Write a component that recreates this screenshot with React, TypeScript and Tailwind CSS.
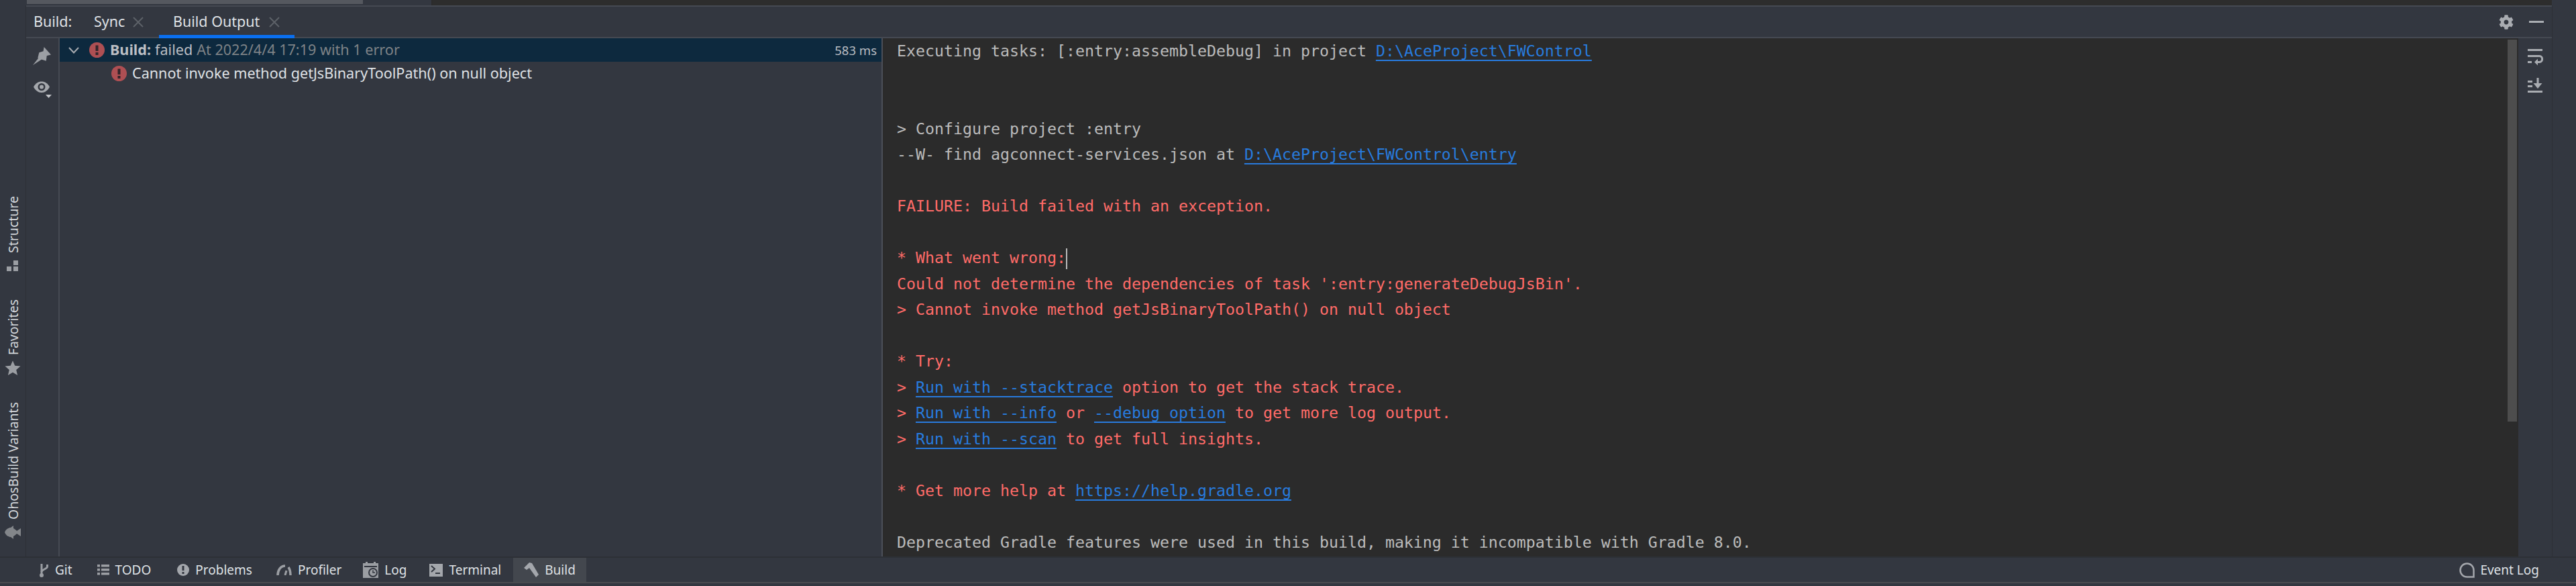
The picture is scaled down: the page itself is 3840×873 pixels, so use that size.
import { FaCog } from 'react-icons/fa';

const UI_FONT = 'font-["Noto_Sans",sans-serif]';

function ErrorDot() {
  return (
    <svg width="23" height="23" viewBox="0 0 23 23" className="shrink-0">
      <circle cx="11.5" cy="11.5" r="11.5" fill="#ae4f53" />
      <rect x="9.5" y="4.5" width="4" height="8.5" fill="#33252b" />
      <rect x="9.5" y="15" width="4" height="4" fill="#33252b" />
    </svg>
  );
}

function Close() {
  return (
    <svg width="16" height="16" viewBox="0 0 16 16" className="shrink-0">
      <path d="M1 1L15 15M15 1L1 15" stroke="#5d6168" strokeWidth="2" />
    </svg>
  );
}

function Lnk({ children }: { children: React.ReactNode }) {
  return <span className="text-[#287bde] underline decoration-2 underline-offset-[5px]">{children}</span>;
}

function StripeItem({ label, icon, className }: { label: string; icon: React.ReactNode; className?: string }) {
  return (
    <div className={`flex rotate-180 items-center [writing-mode:vertical-rl] ${className ?? ''}`}>
      <span className="flex h-[24px] w-[24px] rotate-180 items-center justify-center">{icon}</span>
      <span className="ml-[-1px] mt-[7px] text-[19.5px] leading-[24px] text-[#d4d7dc]">{label}</span>
    </div>
  );
}

function StatusItem({ label, icon, active, className }: { label: string; icon: React.ReactNode; active?: boolean; className?: string }) {
  return (
    <div className={`flex h-[36px] items-center gap-[9px] px-[16px] ${active ? 'bg-[#43474e]' : ''} ${className ?? ''}`}>
      {icon}
      <span className="text-[19px] leading-[36px] text-[#dfe1e5]">{label}</span>
    </div>
  );
}

export default function App() {
  return (
    <div className={`flex h-[873px] w-[3840px] flex-col overflow-hidden bg-[#333740] ${UI_FONT}`}>
      {/* scrap of the editor above the tool window */}
      <div className="flex h-[8px] shrink-0">
        <div className="w-[40px]" />
        <div className="h-[6px] w-[501px] bg-[#55585f]" />
        <div className="w-[102px]" />
        <div className="w-[2px] bg-[#2b2b2b]" />
        <div className="flex-1 bg-[#2d2d2d]" />
        <div className="w-[36px] bg-[#333740]" />
      </div>

      <div className="flex min-h-0 flex-1">
        {/* left stripe */}
        <div className="flex w-[39px] shrink-0 flex-col items-center justify-end border-r border-[#2d3036] pb-[24px] pr-[1px]">
          <StripeItem
            label="Structure"
            className="mb-[38px]"
            icon={
              <svg width="18" height="17" viewBox="0 0 18 17" fill="#9b9ea3">
                <rect x="10" y="0" width="7" height="7" />
                <rect x="0" y="9" width="7" height="7" />
                <rect x="10" y="9" width="7" height="7" />
              </svg>
            }
          />
          <StripeItem
            label="Favorites"
            className="mb-[39px]"
            icon={
              <svg width="24" height="22" viewBox="0 0 24 22" fill="#9b9ea3">
                <path d="M12 0L15.2 7.6L23.5 8.3L17.2 13.7L19.1 21.8L12 17.5L4.9 21.8L6.8 13.7L.5 8.3L8.8 7.6Z" />
              </svg>
            }
          />
          <StripeItem
            label="OhosBuild Variants"
            icon={
              <svg width="24" height="20" viewBox="0 0 24 20" fill="#83868a">
                <path d="M0 10C2 5 6 3 9 3L13 0V4C15 5 17 7 18 8L24 4V16L18 12C17 13 15 15 13 16V20L9 17C6 17 2 15 0 10Z" />
              </svg>
            }
          />
        </div>

        {/* tool window */}
        <div className="flex min-w-0 w-[3765px] shrink-0 flex-col">
          <div className="h-[2px] shrink-0 bg-[#454952]" />
          <div className="flex h-[45px] shrink-0 items-stretch text-[21.5px] text-[#dfe1e5]">
            <div className="ml-[11px] flex w-[90px] items-center">Build:</div>
            <div className="flex w-[97px] items-center gap-[12px]">
              <span>Sync</span>
              <Close />
            </div>
            <div className="relative flex w-[202px] items-center gap-[14px] pl-[21px]">
              <span>Build Output</span>
              <Close />
              <div className="absolute bottom-[-2px] left-0 h-[5px] w-full bg-[#0a6ff0]" />
            </div>
            <div className="ml-auto mr-[12px] flex items-center gap-[23px]">
              <FaCog className="h-[22px] w-[22px] text-[#a9acb1]" />
              <div className="h-[3px] w-[22px] bg-[#a9acb1]" />
            </div>
          </div>
          <div className="h-[2px] shrink-0 bg-[#454952]" />

          <div className="flex min-h-0 flex-1">
            {/* pin + eye */}
            <div className="flex w-[50px] shrink-0 flex-col items-center border-r-2 border-[#454952] pr-[1px] pt-[13px]">
              <svg width="27" height="27" viewBox="0 0 26 26" fill="#9c9fa4">
                <path d="M16 0L26 11L20 12.5L19 20L13 18L7 16L9 8L15 6Z" />
                <path d="M9.5 14L13 17.5L0 26Z" />
              </svg>
              <svg width="28" height="26" viewBox="0 0 28 26" className="mt-[23px]" fill="none">
                <path d="M1 9.5C4 4 8 1.5 13 1.5S22 4 25 9.5C22 15 18 18 13 18S4 15 1 9.5Z" fill="#a4a7ac" />
                <circle cx="13" cy="9.5" r="5.5" fill="#333740" />
                <circle cx="13" cy="9.5" r="3" fill="#a4a7ac" />
                <path d="M19 21H28L23.5 26Z" fill="#c2c4c8" />
              </svg>
            </div>

            {/* tree */}
            <div className="w-[1225px] shrink-0 text-[21.6px] text-[#dfe1e5]">
              <div className="flex h-[35px] items-center bg-[#0d293e] pr-[7px]">
                <svg width="16" height="10" viewBox="0 0 16 10" className="ml-[13px] shrink-0" fill="none">
                  <path d="M1 1L8 8.5L15 1" stroke="#a9acb1" strokeWidth="2" />
                </svg>
                <span className="ml-[15px]"><ErrorDot /></span>
                <span className="ml-[8px] font-bold text-[#bcbfc4]">Build:</span>
                <span className="ml-[6px] text-[#bcbfc4]">failed</span>
                <span className="ml-[6px] text-[#7f8387]">At 2022/4/4 17:19 with 1 error</span>
                <span className="ml-auto text-[18.5px] text-[#bcbfc4]">583 ms</span>
              </div>
              <div className="flex h-[35px] items-center pl-[77px]">
                <ErrorDot />
                <span className="ml-[8px]">Cannot invoke method getJsBinaryToolPath() on null object</span>
              </div>
            </div>
            <div className="w-[2px] shrink-0 bg-[#4b4f58]" />

            {/* console */}
            <div className="flex min-w-0 flex-1 bg-[#2b2b2b]">
              <div className="min-w-0 flex-1 overflow-hidden whitespace-pre pl-[21px] font-['DejaVu_Sans_Mono',monospace] text-[23.25px] leading-[38.5px] text-[#bbbbbb]">
                <div>Executing tasks: [:entry:assembleDebug] in project <Lnk>D:\AceProject\FWControl</Lnk></div>
                <div>&nbsp;</div>
                <div>&nbsp;</div>
                <div>&gt; Configure project :entry</div>
                <div>--W- find agconnect-services.json at <Lnk>D:\AceProject\FWControl\entry</Lnk></div>
                <div>&nbsp;</div>
                <div className="text-[#ff6b68]">FAILURE: Build failed with an exception.</div>
                <div>&nbsp;</div>
                <div className="text-[#ff6b68]">
                  * What went wrong:<span className="inline-block h-[31px] w-[2px] bg-[#bbbbbb] align-middle" />
                </div>
                <div className="text-[#ff6b68]">Could not determine the dependencies of task ':entry:generateDebugJsBin'.</div>
                <div className="text-[#ff6b68]">&gt; Cannot invoke method getJsBinaryToolPath() on null object</div>
                <div>&nbsp;</div>
                <div className="text-[#ff6b68]">* Try:</div>
                <div className="text-[#ff6b68]">&gt; <Lnk>Run with --stacktrace</Lnk> option to get the stack trace.</div>
                <div className="text-[#ff6b68]">&gt; <Lnk>Run with --info</Lnk> or <Lnk>--debug option</Lnk> to get more log output.</div>
                <div className="text-[#ff6b68]">&gt; <Lnk>Run with --scan</Lnk> to get full insights.</div>
                <div>&nbsp;</div>
                <div className="text-[#ff6b68]">* Get more help at <Lnk>https://help.gradle.org</Lnk></div>
                <div>&nbsp;</div>
                <div>Deprecated Gradle features were used in this build, making it incompatible with Gradle 8.0.</div>
              </div>
              <div className="w-[16px] shrink-0 pt-[2px]">
                <div className="h-[569px] w-[14px] bg-[#4d4d4d]" />
              </div>
            </div>

            {/* right toolbar */}
            <div className="flex w-[50px] shrink-0 flex-col items-center pt-[16px]">
              <svg width="24" height="25" viewBox="0 0 24 25" fill="none">
                <rect x="1" y="0" width="22" height="3" fill="#a9acb1" />
                <rect x="1" y="9" width="16" height="3" fill="#a9acb1" />
                <rect x="1" y="18" width="6" height="3" fill="#a9acb1" />
                <path d="M17 10.5H18.5C24 10.5 24 19.5 18.5 19.5H13" stroke="#a9acb1" strokeWidth="3" />
                <path d="M16 14.5L11 19.5L16 24.5Z" fill="#a9acb1" />
              </svg>
              <svg width="24" height="22" viewBox="0 0 24 22" className="mt-[18px]" fill="#a9acb1">
                <rect x="1" y="4" width="7" height="3" />
                <rect x="1" y="11" width="7" height="3" />
                <rect x="1" y="19" width="22" height="3" />
                <rect x="14.5" y="0" width="3" height="9" />
                <path d="M9.5 8H22.5L16 16Z" />
              </svg>
            </div>
          </div>
        </div>

        {/* right stripe */}
        <div className="flex-1 border-l border-[#2d3036]" />
      </div>

      {/* status bar */}
      <div className="h-[2px] shrink-0 bg-[#2d3036]" />
      <div className="flex h-[36px] shrink-0 items-center pl-[42px] pr-[55px]">
        <StatusItem
          label="Git"
          icon={
            <svg width="15" height="22" viewBox="0 0 15 22" fill="none" stroke="#9b9ea3" strokeWidth="3">
              <path d="M4 2V19" />
              <path d="M12.5 3V6C12.5 10 4 10 4 14" />
              <circle cx="4" cy="19" r="1.5" />
            </svg>
          }
        />
        <StatusItem
          label="TODO"
          className="ml-[5px]"
          icon={
            <svg width="18" height="16" viewBox="0 0 18 16" fill="#9b9ea3">
              <rect x="0" y="0" width="4" height="3.5" /><rect x="6" y="0" width="12" height="3.5" />
              <rect x="0" y="6" width="4" height="3.5" /><rect x="6" y="6" width="12" height="3.5" />
              <rect x="0" y="12" width="4" height="3.5" /><rect x="6" y="12" width="12" height="3.5" />
            </svg>
          }
        />
        <StatusItem
          label="Problems"
          className="ml-[7px]"
          icon={
            <svg width="18" height="18" viewBox="0 0 18 18">
              <circle cx="9" cy="9" r="9" fill="#a4a7ac" />
              <rect x="7.5" y="3" width="3" height="7" fill="#333740" />
              <rect x="7.5" y="12" width="3" height="3" fill="#333740" />
            </svg>
          }
        />
        <StatusItem
          label="Profiler"
          className="ml-[4px]"
          icon={
            <svg width="23" height="16" viewBox="0 0 23 16" fill="none" stroke="#9b9ea3" strokeWidth="3.5">
              <path d="M2 16C2 9 6 2 13 2" />
              <path d="M13 16L15 9" strokeWidth="3" />
              <path d="M18 4C20 7 21 11 21 16" />
            </svg>
          }
        />
        <StatusItem
          label="Log"
          icon={
            <svg width="23" height="24" viewBox="0 0 23 24">
              <rect x="0" y="2" width="23" height="22" fill="#9b9ea3" />
              <rect x="4" y="0" width="3" height="4" fill="#9b9ea3" />
              <rect x="16" y="0" width="3" height="4" fill="#9b9ea3" />
              <rect x="2" y="6" width="19" height="2" fill="#333740" />
              <circle cx="15" cy="16" r="7" fill="#333740" />
              <circle cx="15" cy="16" r="5" fill="#9b9ea3" />
              <path d="M15 12.5V16H18" stroke="#333740" strokeWidth="1.5" fill="none" />
            </svg>
          }
        />
        <StatusItem
          label="Terminal"
          className="ml-[2px]"
          icon={
            <svg width="20" height="19" viewBox="0 0 20 19">
              <rect width="20" height="19" fill="#a4a7ac" />
              <path d="M3 3L8 7.5L3 12" stroke="#333740" strokeWidth="2" fill="none" />
              <rect x="9" y="13" width="7" height="2" fill="#333740" />
            </svg>
          }
        />
        <StatusItem
          label="Build"
          active
          className="ml-[2px]"
          icon={
            <svg width="22" height="22" viewBox="0 0 22 22" fill="#a4a7ac">
              <path d="M0 8L8 0L12 1L22 18L18 22L8 8L4 11Z" />
            </svg>
          }
        />
        <div className="ml-auto flex items-center gap-[8px]">
          <svg width="23" height="23" viewBox="0 0 23 23" fill="none">
            <path d="M21.5 21.5H11.5A10 10 0 1 1 21.5 11.5Z" stroke="#a4a7ac" strokeWidth="2.5" />
          </svg>
          <span className="text-[19px] text-[#dfe1e5]">Event Log</span>
        </div>
      </div>
      <div className="h-[2px] shrink-0 bg-[#4a4b4f]" />
      <div className="h-[4px] shrink-0" />
    </div>
  );
}
